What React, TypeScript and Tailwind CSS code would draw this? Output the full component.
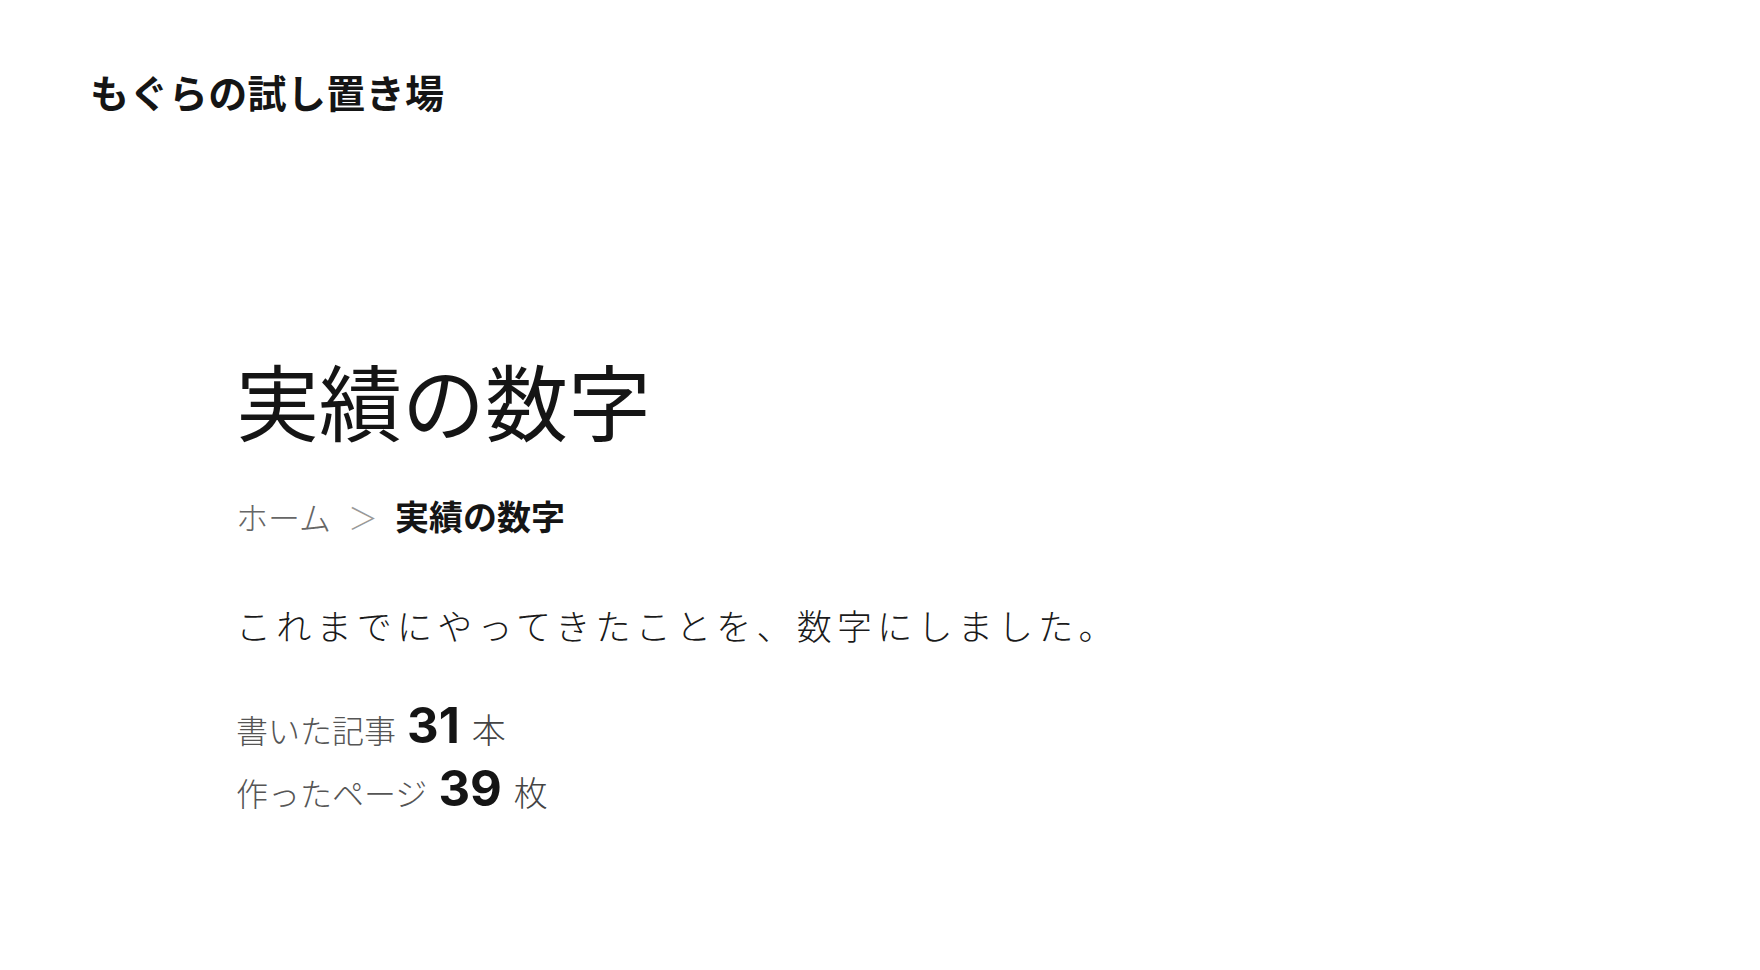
const jp = "font-['Noto_Sans_CJK_JP','Noto_Sans',sans-serif]";

const stats = [
  { label: '書いた記事', value: '31', unit: '本' },
  { label: '作ったページ', value: '39', unit: '枚' },
];

export default function App() {
  return (
    <div className={`min-h-screen bg-white text-[#151515] ${jp}`}>
      <header className="pl-[90px] pt-[72px]">
        <p className="text-[39px] font-bold leading-none tracking-[0.01em]">もぐらの試し置き場</p>
      </header>

      <main className="pl-[236px] pt-[247px]">
        <h1 className="text-[83px] font-normal leading-none">実績の数字</h1>

        <nav className="mt-[58px] flex items-center leading-none">
          <span className="text-[32px] text-[#666] font-light">ホーム</span>
          <span className="mx-[17px] text-[30px] text-[#999] font-light">＞</span>
          <span className="text-[34px] font-bold">実績の数字</span>
        </nav>

        <p className="mt-[74px] text-[35px] font-light leading-none tracking-[0.15em] text-[#1a1a1a]">
          これまでにやってきたことを、数字にしました。
        </p>

        <ul className="mt-[59px] flex flex-col gap-[14px]">
          {stats.map((s) => (
            <li key={s.label} className="flex items-baseline leading-none">
              <span className="text-[32px] font-light text-[#555]">{s.label}</span>
              <span className="ml-[11px] text-[49px] font-bold font-['Inter','Noto_Sans',sans-serif] text-[#151515]">
                {s.value}
              </span>
              <span className="ml-[12px] text-[34px] font-light text-[#444]">{s.unit}</span>
            </li>
          ))}
        </ul>
      </main>
    </div>
  );
}
